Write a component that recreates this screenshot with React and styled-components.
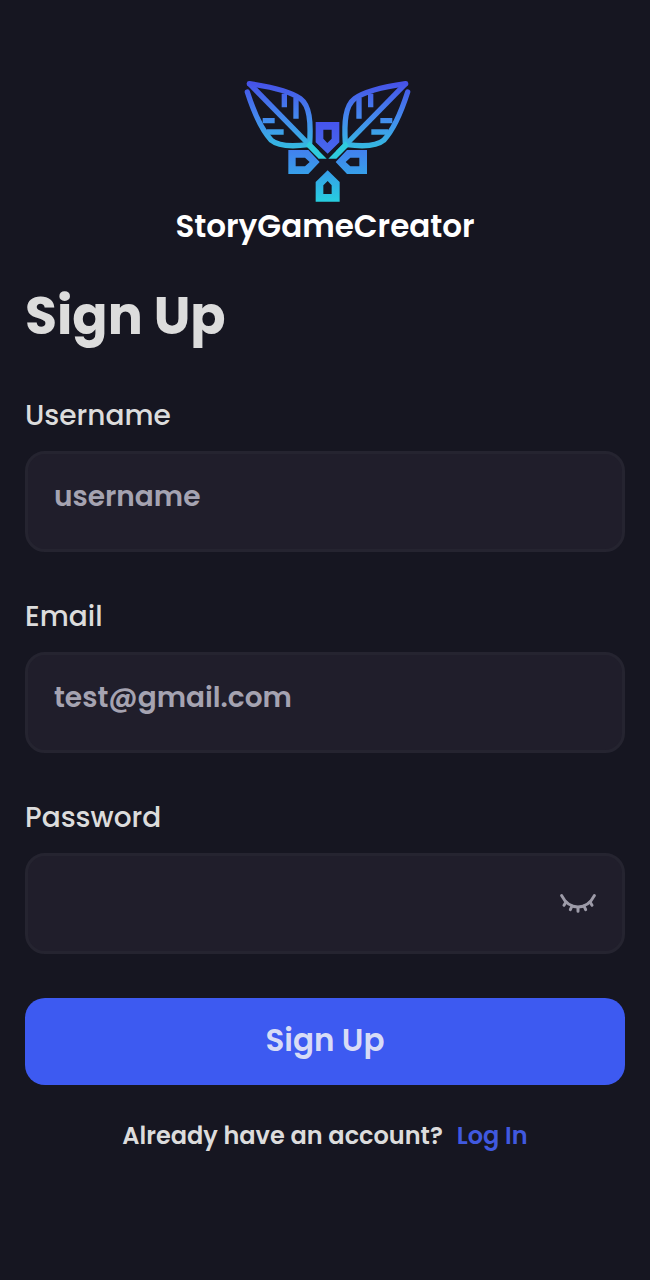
import React, { useState } from 'react';
import styled, { createGlobalStyle } from 'styled-components';

const GlobalStyle = createGlobalStyle`
  *, *::before, *::after { box-sizing: border-box; }
  body {
    margin: 0;
    background: #161621;
    color: #dcdcdc;
    font-family: Poppins, Inter, "Liberation Sans", sans-serif;
  }
`;

const Page = styled.main`
  min-height: 100vh;
  padding: 70px 25px 40px;
  background: #161621;
`;

const Brand = styled.header`
  display: flex;
  flex-direction: column;
  align-items: center;
`;

const BrandMark = styled.svg`
  display: block;
  width: 185px;
  height: 140px;
`;

const BrandName = styled.p`
  margin: 0;
  color: #ffffff;
  font-size: 31px;
  font-weight: 600;
  line-height: 32px;
`;

const Title = styled.h1`
  margin: 40px 0 45px;
  font-size: 52px;
  font-weight: 700;
  line-height: 68px;
`;

const Form = styled.form`
  display: flex;
  flex-direction: column;
  gap: 44px;
`;

const Field = styled.div`
  display: flex;
  flex-direction: column;
  gap: 15px;
`;

const Label = styled.label`
  font-size: 28px;
  font-weight: 500;
  line-height: 41px;
`;

const InputFrame = styled.div`
  display: flex;
  align-items: center;
  height: 101px;
  padding-right: 26px;
  border: 3px solid #252430;
  border-radius: 20px;
  background: #201e2b;

  &:focus-within { border-color: #3d5af1; }
`;

const Input = styled.input`
  flex: 1;
  min-width: 0;
  height: 100%;
  padding: 0 26px 10px;
  border: 0;
  outline: 0;
  background: transparent;
  color: #dcdcdc;
  font: inherit;
  font-size: 28px;
  font-weight: 600;

  &::placeholder { color: #a5a3b1; opacity: 1; }
`;

const RevealButton = styled.button`
  flex: none;
  display: flex;
  padding: 0;
  border: 0;
  background: transparent;
  color: #9d9ba8;
  cursor: pointer;

  svg { display: block; width: 36px; height: 24px; }
`;

const SubmitButton = styled.button`
  height: 87px;
  padding: 0 24px 3px;
  border: 0;
  border-radius: 20px;
  background: #3d5af1;
  color: #d8dcf6;
  font: inherit;
  font-size: 31px;
  font-weight: 600;
  cursor: pointer;
`;

const Footer = styled.p`
  display: flex;
  flex-wrap: wrap;
  justify-content: center;
  gap: 0 14px;
  margin: 33px 0 0;
  font-size: 24px;
  font-weight: 600;
  line-height: 36px;
`;

const FooterLink = styled.a`
  color: #4059df;
  text-decoration: none;
`;

function Leaf() {
  return (
    <g fill="none" stroke="url(#brand)" strokeWidth="16" strokeLinejoin="round">
      <path d="M42 41 C90 48 160 60 195 86 C223 107 227 155 223 220" strokeLinecap="round" />
      <path d="M36 66 C54 122 79 180 108 211 C130 230 178 229 218 224" strokeLinecap="round" />
      <path d="M42 41 L246 249" />
      <path d="M147 71 V112 M182 83 V146 M82 152 H118 M94 186 H145" />
    </g>
  );
}

function BrandLogo() {
  return (
    <BrandMark viewBox="-7 0 555 420" aria-hidden="true">
      <defs>
        <linearGradient id="brand" gradientUnits="userSpaceOnUse" x1="0" y1="40" x2="0" y2="265">
          <stop offset="0" stopColor="#4653e8" />
          <stop offset="0.45" stopColor="#4488ee" />
          <stop offset="1" stopColor="#2fcbdc" />
        </linearGradient>
        <linearGradient id="top" gradientUnits="userSpaceOnUse" x1="0" y1="156" x2="0" y2="250">
          <stop offset="0" stopColor="#4654ec" />
          <stop offset="1" stopColor="#4669ed" />
        </linearGradient>
        <linearGradient id="side" gradientUnits="userSpaceOnUse" x1="0" y1="240" x2="0" y2="312">
          <stop offset="0" stopColor="#4280ee" />
          <stop offset="1" stopColor="#379fe9" />
        </linearGradient>
        <linearGradient id="bottom" gradientUnits="userSpaceOnUse" x1="0" y1="301" x2="0" y2="395">
          <stop offset="0" stopColor="#379ce9" />
          <stop offset="1" stopColor="#27cedf" />
        </linearGradient>
      </defs>
      <Leaf />
      <g transform="translate(553 0) scale(-1 1)">
        <Leaf />
      </g>
      <path d="M222 214 L274 266 H250 L212 228 Z" fill="#2fcbdc" />
      <path d="M331 214 L279 266 H303 L341 228 Z" fill="#2fcbdc" />
      <g fillRule="evenodd">
        <path d="M241 156 H312 V217 L277 251 L241 217 Z M264 179 V206 L276 219 L289 206 V179 Z" fill="url(#top)" />
        <path d="M159 240 H219 L253 276 L219 312 H159 Z M181 263 V289 H209 L223 276 L209 263 Z" fill="url(#side)" />
        <path d="M395 240 H335 L301 276 L335 312 H395 Z M372 263 V289 H345 L331 276 L345 263 Z" fill="url(#side)" />
        <path d="M241 395 V336 L277 301 L313 336 V395 Z M264 372 H289 V346 L277 333 L264 346 Z" fill="url(#bottom)" />
      </g>
    </BrandMark>
  );
}

function ClosedEye() {
  return (
    <svg viewBox="0 0 108 72" fill="none" stroke="currentColor" strokeWidth="9" strokeLinecap="round" aria-hidden="true">
      <path d="M5 11 C28 56 80 56 103 11" />
      <path d="M18 30 L12 40 M36 42 L31 53 M54 46 V58 M72 42 L77 53 M90 30 L96 40" />
    </svg>
  );
}

function TextField({ id, label, children, ...inputProps }) {
  return (
    <Field>
      <Label htmlFor={id}>{label}</Label>
      <InputFrame>
        <Input id={id} name={id} {...inputProps} />
        {children}
      </InputFrame>
    </Field>
  );
}

export default function App() {
  const [visible, setVisible] = useState(false);

  return (
    <>
      <GlobalStyle />
      <Page>
        <Brand>
          <BrandLogo />
          <BrandName>StoryGameCreator</BrandName>
        </Brand>
        <Title>Sign Up</Title>
        <Form onSubmit={(event) => event.preventDefault()}>
          <TextField id="username" label="Username" type="text" placeholder="username" />
          <TextField id="email" label="Email" type="email" placeholder="test@gmail.com" />
          <TextField id="password" label="Password" type={visible ? 'text' : 'password'}>
            <RevealButton
              type="button"
              aria-label="Show password"
              aria-pressed={visible}
              onClick={() => setVisible(!visible)}
            >
              <ClosedEye />
            </RevealButton>
          </TextField>
          <SubmitButton type="submit">Sign Up</SubmitButton>
        </Form>
        <Footer>
          Already have an account?
          <FooterLink href="#login">Log In</FooterLink>
        </Footer>
      </Page>
    </>
  );
}
